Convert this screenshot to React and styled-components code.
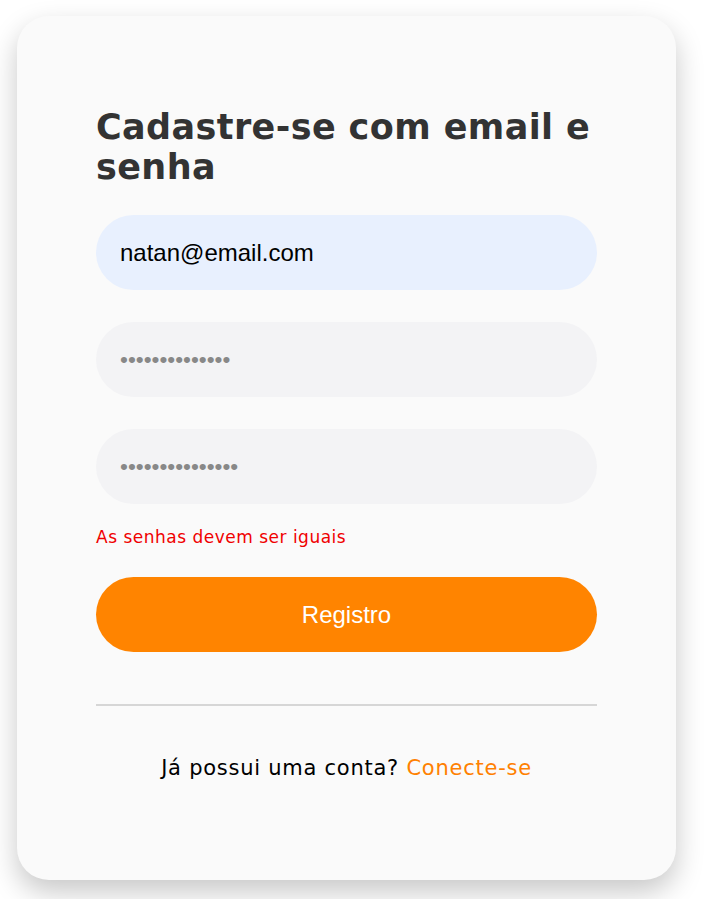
import React from 'react'
import styled, { createGlobalStyle } from 'styled-components'

const GlobalStyle = createGlobalStyle`
  body {
    margin: 0;
    background: #ffffff;
    font-family: 'DejaVu Sans', 'Open Sans', sans-serif;
  }
`

const Page = styled.div`
  padding: 16px 31px 19px 17px;
`

const Card = styled.main`
  background: #fafafa;
  border-radius: 32px;
  box-shadow: 0 12px 28px rgba(0, 0, 0, 0.22);
  padding: 91px 79px 0 79px;
  height: 864px;
  box-sizing: border-box;
  display: flex;
  flex-direction: column;
`

const Title = styled.h1`
  margin: 0 0 28px;
  font-family: 'DejaVu Sans', sans-serif;
  font-weight: 700;
  font-size: 35px;
  line-height: 40px;
  letter-spacing: 0.4px;
  color: #333333;
`

const Form = styled.form`
  display: flex;
  flex-direction: column;
`

const Input = styled.input`
  height: 75px;
  border: none;
  border-radius: 38px;
  padding: 0 24px;
  margin-bottom: ${({ $last }) => ($last ? '22px' : '32px')};
  background: ${({ $filled }) => ($filled ? '#e8f0fe' : '#f3f3f5')};
  color: ${({ type }) => (type === 'password' ? '#888888' : '#000000')};
  font-family: 'Liberation Sans', Arial, sans-serif;
  font-size: ${({ type }) => (type === 'password' ? '22.5px' : '24px')};
  outline: none;
  box-sizing: border-box;
  width: 100%;
`

const ErrorText = styled.p`
  margin: 0 0 29px;
  color: #f00000;
  font-size: 17px;
  line-height: 22px;
  letter-spacing: 0.5px;
`

const Button = styled.button`
  height: 75px;
  border: none;
  border-radius: 38px;
  background: #ff8400;
  color: #ffffff;
  font-family: 'Liberation Sans', Arial, sans-serif;
  font-size: 24px;
  cursor: pointer;
`

const Divider = styled.hr`
  border: none;
  border-top: 2px solid #d6d6d6;
  margin: 52px 0 0;
`

const Footer = styled.p`
  margin: 48px 0 0;
  text-align: center;
  font-size: 21px;
  line-height: 28px;
  letter-spacing: 0.75px;
  color: #000000;
`

const FooterLink = styled.a`
  color: #ff8000;
  text-decoration: none;
`

export default function App() {
  return (
    <>
      <GlobalStyle />
      <Page>
        <Card>
          <Title>Cadastre-se com email e senha</Title>
          <Form onSubmit={(e) => e.preventDefault()}>
            <Input type='email' $filled defaultValue='natan@email.com' />
            <Input type='password' defaultValue='12345678901234' />
            <Input type='password' $last defaultValue='123456789012345' />
            <ErrorText>As senhas devem ser iguais</ErrorText>
            <Button type='submit'>Registro</Button>
          </Form>
          <Divider />
          <Footer>
            Já possui uma conta? <FooterLink href='#'>Conecte-se</FooterLink>
          </Footer>
        </Card>
      </Page>
    </>
  )
}
